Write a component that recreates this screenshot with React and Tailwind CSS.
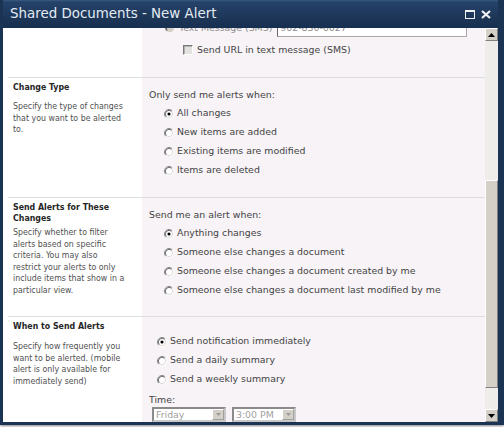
import React from "react";

function Radio({ checked, disabled }) {
  return (
    <svg width="10" height="10" viewBox="0 0 12 12" className="shrink-0">
      <circle cx="6" cy="6" r="5.5" fill={disabled ? "#d4d0c8" : "#ffffff"} />
      <path d="M2.11 9.89A5.5 5.5 0 0 1 9.89 2.11" fill="none" stroke="#808080" />
      <path d="M9.89 2.11A5.5 5.5 0 0 1 2.11 9.89" fill="none" stroke="#ffffff" />
      <path d="M2.82 9.18A4.5 4.5 0 0 1 9.18 2.82" fill="none" stroke="#404040" />
      <path d="M9.18 2.82A4.5 4.5 0 0 1 2.82 9.18" fill="none" stroke="#d4d0c8" />
      {checked && <circle cx="6" cy="6" r="1.9" fill="#000" />}
    </svg>
  );
}

function RadioRow({ checked, children, indent }) {
  return (
    <div className={`flex items-center h-[19px] ${indent}`}>
      <Radio checked={checked} />
      <span className="ml-[3px] whitespace-nowrap">{children}</span>
    </div>
  );
}

function Select({ value, width }) {
  return (
    <div className={`flex h-[15px] ${width} border-2 border-t-[#8a8a8a] border-l-[#8a8a8a] border-b-[#c8c8c8] border-r-[#c8c8c8] bg-white`}>
      <div className="flex-1 flex items-center pl-[2px] text-[#a0a0a0] leading-none">{value}</div>
      <div className="w-[12px] bg-[#d4d0c8] border border-t-white border-l-white border-b-[#a0a0a0] border-r-[#a0a0a0] flex items-center justify-center">
        <svg width="5" height="3" viewBox="0 0 5 3">
          <path d="M0 0h5L2.5 3z" fill="#9a9a9a" />
        </svg>
      </div>
    </div>
  );
}

function SectionLeft({ title, desc, gap }) {
  return (
    <div className="w-[134px] pl-[5px] pt-[4px] font-['DejaVu_Sans_Condensed','Liberation_Sans',sans-serif] text-[8.75px]">
      <div className="font-bold text-[#262626] leading-[11px] whitespace-nowrap">
        {title.map((t, i) => (
          <div key={i}>{t}</div>
        ))}
      </div>
      <div className={`${gap} text-[#505050] leading-[11.5px] whitespace-nowrap`}>
        {desc.map((t, i) => (
          <div key={i}>{t}</div>
        ))}
      </div>
    </div>
  );
}

function ScrollBtn({ up }) {
  return (
    <div className="h-[13px] w-[13px] bg-[#d4d0c8] border border-t-white border-l-white border-b-[#808080] border-r-[#808080] flex items-center justify-center">
      <svg width="7" height="4" viewBox="0 0 7 4">
        {up ? <path d="M0 4h7L3.5 0z" fill="#000" /> : <path d="M0 0h7L3.5 4z" fill="#000" />}
      </svg>
    </div>
  );
}

export default function App() {
  const right = "font-['DejaVu_Sans',sans-serif] text-[9.4px] text-[#444444]";
  return (
    <div className="w-[504px] h-[427px] bg-white overflow-hidden">
      <div className="flex flex-col h-[425px] border-l-[3px] border-r-[6px] border-b-[3px] border-[#1b3454] shadow-[0_1px_3px_rgba(0,0,0,0.5)]">
        {/* title bar */}
        <div className="h-[28px] shrink-0 flex items-center pl-[7px] pr-[7px] bg-[linear-gradient(to_bottom,#3a5a80_0px,#25426a_2px,#1d3759_60%,#172f50_100%)]">
          <span className="font-['DejaVu_Sans',sans-serif] text-[13.4px] text-[#e4ebf3] whitespace-nowrap">
            Shared Documents - New Alert
          </span>
          <div className="ml-auto flex items-center gap-[6px]">
            <svg width="10" height="9" viewBox="0 0 10 9">
              <rect x="0.5" y="0.5" width="9" height="8" fill="none" stroke="#f2f2f2" />
              <rect x="0" y="0" width="10" height="2" fill="#f2f2f2" />
            </svg>
            <svg width="10" height="9" viewBox="0 0 10 9">
              <path d="M1 1L9 8M9 1L1 8" stroke="#f2f2f2" strokeWidth="2.2" />
            </svg>
          </div>
        </div>

        {/* body */}
        <div className="flex-1 flex overflow-hidden">
          <div className="flex-1 overflow-hidden bg-[linear-gradient(to_right,#ffffff_139px,#f7f3f7_139px)]">
            <div className="-mt-[9px]">
              {/* partial SMS block (scrolled) */}
              <div className={`h-[58px] ${right}`}>
                <div className="flex items-center h-[18px] pl-[162px]">
                  <Radio disabled />
                  <span className="ml-[4px] text-[#8c8c8c] whitespace-nowrap">Text Message (SMS)</span>
                  <div className="ml-[5px] w-[190px] h-[18px] bg-white border border-[#a8a8a8] border-l-[#6a6a6a] flex items-center pl-[2px] text-[#8c8c8c]">
                    902-830-6627
                  </div>
                </div>
                <div className="flex items-center h-[14px] mt-[6px] pl-[180px]">
                  <div className="w-[10px] h-[10px] bg-[#e4e2e0] border border-t-[#7a7a7a] border-l-[#7a7a7a] border-b-white border-r-white shadow-[inset_1px_1px_0_#b0b0b0]" />
                  <span className="ml-[4px] whitespace-nowrap">Send URL in text message (SMS)</span>
                </div>
              </div>

              {/* Change Type */}
              <div className="ml-[5px] h-[120px] flex border-t border-[#dedede]">
                <SectionLeft
                  title={["Change Type"]}
                  desc={["Specify the type of changes", "that you want to be alerted", "to."]}
                  gap="mt-[8px]"
                />
                <div className={`flex-1 pl-[7px] pt-[11px] ${right}`}>
                  <div className="h-[12px] leading-[12px]">Only send me alerts when:</div>
                  <div className="mt-[3px]">
                    <RadioRow checked indent="pl-[15px]">All changes</RadioRow>
                    <RadioRow indent="pl-[15px]">New items are added</RadioRow>
                    <RadioRow indent="pl-[15px]">Existing items are modified</RadioRow>
                    <RadioRow indent="pl-[15px]">Items are deleted</RadioRow>
                  </div>
                </div>
              </div>

              {/* Send Alerts for These Changes */}
              <div className="ml-[5px] h-[119px] flex border-t border-[#dedede]">
                <SectionLeft
                  title={["Send Alerts for These", "Changes"]}
                  desc={[
                    "Specify whether to filter",
                    "alerts based on specific",
                    "criteria. You may also",
                    "restrict your alerts to only",
                    "include items that show in a",
                    "particular view.",
                  ]}
                  gap="mt-[3px]"
                />
                <div className={`flex-1 pl-[7px] pt-[11px] ${right}`}>
                  <div className="h-[12px] leading-[12px]">Send me an alert when:</div>
                  <div className="mt-[3px]">
                    <RadioRow checked indent="pl-[15px]">Anything changes</RadioRow>
                    <RadioRow indent="pl-[15px]">Someone else changes a document</RadioRow>
                    <RadioRow indent="pl-[15px]">Someone else changes a document created by me</RadioRow>
                    <RadioRow indent="pl-[15px]">Someone else changes a document last modified by me</RadioRow>
                  </div>
                </div>
              </div>

              {/* When to Send Alerts */}
              <div className="ml-[5px] h-[120px] flex border-t border-[#dedede]">
                <SectionLeft
                  title={["When to Send Alerts"]}
                  desc={[
                    "Specify how frequently you",
                    "want to be alerted. (mobile",
                    "alert is only available for",
                    "immediately send)",
                  ]}
                  gap="mt-[9px]"
                />
                <div className={`flex-1 pl-[7px] pt-[15px] ${right}`}>
                  <RadioRow checked indent="pl-[8px]">Send notification immediately</RadioRow>
                  <RadioRow indent="pl-[8px]">Send a daily summary</RadioRow>
                  <RadioRow indent="pl-[8px]">Send a weekly summary</RadioRow>
                  <div className="mt-[5px] h-[12px] leading-[12px]">Time:</div>
                  <div className="mt-[1px] ml-[3px] flex gap-[6px]">
                    <Select value="Friday" width="w-[74px]" />
                    <Select value="3:00 PM" width="w-[64px]" />
                  </div>
                </div>
              </div>
            </div>
          </div>

          {/* scrollbar */}
          <div className="w-[13px] flex flex-col bg-[#eeedea]">
            <ScrollBtn up />
            <div className="h-[139px]" />
            <div className="h-[208px] bg-[#d4d0c8] border border-t-white border-l-white border-b-[#808080] border-r-[#808080]" />
            <div className="flex-1" />
            <ScrollBtn />
          </div>
        </div>
      </div>
    </div>
  );
}
